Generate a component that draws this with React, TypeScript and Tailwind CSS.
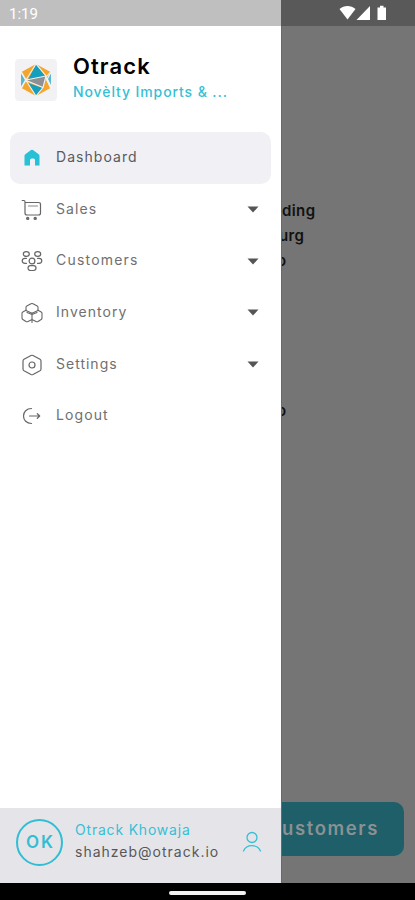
import type { ReactNode } from "react";

const stroke = {
  fill: "none",
  stroke: "currentColor",
  strokeLinecap: "round",
  strokeLinejoin: "round",
} as const;

function LogoMark() {
  return (
    <svg width="32" height="34" viewBox="0 0 32 34">
      <path d="M16 1 30.500 9 26 17 30.500 25 16 33 1.500 25 6 17 1.500 9Z" fill="#f5a52b" />
      <path d="M1 10.500 5 17 1 23.500ZM31 10.500 28 16 31 22Z" fill="#55b9cf" />
      <path d="M16 1 26 14 8 17Z" fill="#169fbd" />
      <path d="M6 17.500 26 13 23 24.500Z" fill="#8f9093" />
      <path d="M8 20 23 25 16 33Z" fill="#169fbd" />
      <path
        d="M16 1 6 17 26 13ZM6 17.500 16 33 23 24.500ZM26 13 23 24.500M1.500 9 6 17 1.500 25M30.500 9 26 14 30.500 25"
        fill="none"
        stroke="#f2f2f4"
        strokeWidth="1.100"
      />
    </svg>
  );
}

function HomeIcon() {
  return (
    <svg width="22" height="22" viewBox="0 0 22 22">
      <path
        d="M3.500 9Q3.500 8 4.300 7.300L10 3Q11 2.300 12 3L17.700 7.300Q18.500 8 18.500 9V18.500H14V13Q14 11.500 12.500 11.500H10.500Q9 11.500 9 13V18.500H3.500Z"
        fill="#27c0d6"
      />
    </svg>
  );
}

function CartIcon() {
  return (
    <svg width="22" height="22" viewBox="0 0 22 22" {...stroke} strokeWidth="1.200">
      <path d="M1.200 1.500H3Q4 1.500 4 3V14Q4 16 6 16H17.500Q19.500 16 19.500 14V5.500Q19.500 3.500 17.500 3.500H4" />
      <path d="M7.500 7H16.500" stroke="#8a8a8a" />
      <circle cx="6.700" cy="19.400" r="1.100" fill="#777" />
      <circle cx="14.200" cy="19.400" r="1.100" fill="#777" />
    </svg>
  );
}

function PeopleIcon() {
  return (
    <svg width="22" height="22" viewBox="0 0 22 22" {...stroke} strokeWidth="1.200">
      <ellipse cx="5.300" cy="4" rx="3" ry="2.400" />
      <ellipse cx="16.700" cy="4" rx="3" ry="2.400" />
      <circle cx="11" cy="11" r="2.900" />
      <path d="M5.500 8.300H4Q1.200 8.300 1.200 10.800T4 13.300H5.500M16.500 8.300H18Q20.800 8.300 20.800 10.800T18 13.300H16.500" />
      <rect x="7" y="15.700" width="8" height="4.800" rx="2.400" />
    </svg>
  );
}

function BoxesIcon() {
  return (
    <svg width="22" height="22" viewBox="0 0 22 22" {...stroke} strokeWidth="1.100">
      <path d="M5 8.500V5Q5 4.300 5.800 3.900L10 1.700Q11 1.200 12 1.700L16.200 3.900Q17 4.300 17 5V8.500L11 11.200Z" />
      <path d="M5 8.200 1.800 10Q1 10.500 1 11.300V16Q1 17 1.800 17.500L5 19.500Q6 20 7 19.500L11 17.500V11.200M17 8.200 20.200 10Q21 10.500 21 11.300V16Q21 17 20.200 17.500L17 19.500Q16 20 15 19.500L11 17.500V20.500M6 10.500 11 12.500 16 10.500" />
    </svg>
  );
}

function SettingsIcon() {
  return (
    <svg width="22" height="22" viewBox="0 0 22 22" {...stroke} strokeWidth="1.200">
      <path d="M10 1.500Q11 1 12 1.500L19 5.200Q20 5.800 20 7V15Q20 16.200 19 16.800L12 20.500Q11 21 10 20.500L3 16.800Q2 16.200 2 15V7Q2 5.800 3 5.200Z" />
      <circle cx="11" cy="11" r="3" />
    </svg>
  );
}

function LogoutIcon() {
  return (
    <svg width="22" height="22" viewBox="0 0 22 22" {...stroke} strokeWidth="1.200">
      <path d="M10.500 3.500C5.500 3.500 2.500 7 2.500 11S5.500 18.500 10.500 18.500M8.500 11H18.500M16.300 8.700 18.700 11 16.300 13.300" />
    </svg>
  );
}

type Item = { label: string; icon: ReactNode; tracking: string; expandable?: boolean };

const items: Item[] = [
  { label: "Dashboard", icon: <HomeIcon />, tracking: "tracking-[1.05px]" },
  { label: "Sales", icon: <CartIcon />, tracking: "tracking-[1.1px]", expandable: true },
  { label: "Customers", icon: <PeopleIcon />, tracking: "tracking-[1.2px]", expandable: true },
  { label: "Inventory", icon: <BoxesIcon />, tracking: "tracking-[1.05px]", expandable: true },
  { label: "Settings", icon: <SettingsIcon />, tracking: "tracking-[1px]", expandable: true },
  { label: "Logout", icon: <LogoutIcon />, tracking: "tracking-[1.1px]" },
];

function MenuItem({ item, active }: { item: Item; active: boolean }) {
  return (
    <li
      className={
        active
          ? "flex h-[51.7px] items-center rounded-[10px] bg-[#f0f0f5] pl-[11px] pr-3 text-[#5a5a5e]"
          : "flex h-[51.7px] items-center rounded-[10px] pl-[11px] pr-3 text-[#707070]"
      }
    >
      <span className="mr-[13px] text-[#666]">{item.icon}</span>
      <span className={`pb-[2px] text-[14px] leading-5 ${item.tracking}`}>{item.label}</span>
      {item.expandable && (
        <svg className="ml-auto" width="12" height="7" viewBox="0 0 12 7">
          <path d="M0.500 0.500H11.500L6 6.500Z" fill="#555" />
        </svg>
      )}
    </li>
  );
}

function Drawer() {
  return (
    <aside className="flex w-[281px] shrink-0 flex-col bg-white">
      <header className="flex h-[106px] pl-[15px] pt-[27px]">
        <div className="mt-[6px] flex size-[42px] items-center justify-center rounded-[4px] bg-[#f2f2f4]">
          <LogoMark />
        </div>
        <div className="ml-4">
          <h1 className="text-[22px] font-semibold leading-[26px] tracking-[1.1px] text-black">Otrack</h1>
          <p className="text-[14px] font-medium leading-[26px] tracking-[0.9px] text-[#36bfd6]">
            Novèlty Imports &amp; ...
          </p>
        </div>
      </header>
      <ul className="mx-[10px] -mt-px pt-px">
        {items.map((item, i) => (
          <MenuItem key={item.label} item={item} active={i === 0} />
        ))}
      </ul>
      <footer className="mt-auto flex h-[75px] bg-[#e5e5e9] pl-4 pt-[11px]">
        <div className="flex size-[47px] items-center justify-center rounded-full border-2 border-[#32bdd4] pl-[2px] text-[17px] font-semibold tracking-[2px] text-[#32bdd4]">
          OK
        </div>
        <div className="ml-[12px] w-[167px] text-[14px] leading-[22px]">
          <p className="tracking-[0.8px] text-[#36bfd6]">Otrack Khowaja</p>
          <p className="tracking-[1px] text-[#57575b]">shahzeb@otrack.io</p>
        </div>
        <svg
          className="mt-[12px] text-[#36bfd6]"
          width="20"
          height="22"
          viewBox="0 0 20 22"
          {...stroke}
          strokeWidth="1.300"
        >
          <circle cx="10" cy="6.500" r="5" />
          <path d="M1.500 20C3 16.500 6 14.700 10 14.700S17 16.500 18.500 20" />
        </svg>
      </footer>
    </aside>
  );
}

function DimmedPage() {
  return (
    <main className="flex flex-1 flex-col overflow-hidden border-l border-[#696969] bg-[#757575]">
      <div className="mt-[172px] text-[15px] font-semibold leading-[25px] tracking-[0.4px] text-[#111]">
        <p>ding</p>
        <p className="-ml-[3px]">urg</p>
        <p className="-ml-[5px]">o</p>
        <p className="-ml-[5px] mt-[125px]">o</p>
      </div>
      <div className="mb-[27px] mr-[11px] mt-auto flex h-[54px] items-center rounded-r-[10px] bg-[#1e5f69] text-[18.5px] font-semibold tracking-[1.6px] text-[#8b9193]">
        ustomers
      </div>
    </main>
  );
}

export default function App() {
  return (
    <div className="flex h-[900px] w-[415px] flex-col overflow-hidden bg-black font-['Inter',sans-serif]">
      <div className="flex h-[26px] shrink-0">
        <div className="w-[281px] bg-[#bfbfbf] pl-[9px] font-['Roboto',sans-serif] text-[15px] leading-[28px] text-white">
          1:19
        </div>
        <div className="flex flex-1 bg-[#595959] pl-[58px] pt-[5px]">
          <svg width="50" height="16" viewBox="0 0 50 16" fill="#fff">
            <path d="M0.500 4C5 0 12 0 16.500 4L8.500 14.500Z" />
            <path d="M31 1V15H17.500Z" />
            <path d="M38.500 2.500H41V0.800H44.500V2.500H47V15H38.500Z" />
          </svg>
        </div>
      </div>
      <div className="flex h-[857px] shrink-0">
        <Drawer />
        <DimmedPage />
      </div>
      <div className="flex flex-1 justify-center pt-[8px]">
        <div className="h-1 w-[77px] rounded-full bg-[#f2f2f2]" />
      </div>
    </div>
  );
}
